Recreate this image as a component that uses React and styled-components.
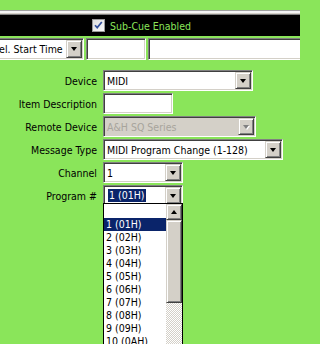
import React from 'react';
import styled, { createGlobalStyle, css } from 'styled-components';

const GREEN = '#8ae55a';

const GlobalStyle = createGlobalStyle`
  html, body {
    margin: 0;
    padding: 0;
    background: ${GREEN};
    overflow: hidden;
  }
  body {
    font-family: "DejaVu Sans Condensed", "Liberation Sans", Arial, sans-serif;
    font-size: 10.5px;
    color: #000;
  }
`;

const sunken = css`
  box-sizing: border-box;
  border: 1px solid;
  border-color: #808080 #fff #fff #808080;
  box-shadow: inset 1px 1px #404040, inset -1px -1px #d4d0c8;
`;

const raised = css`
  box-sizing: border-box;
  background: #d4d0c8;
  border: 1px solid;
  border-color: #d4d0c8 #404040 #404040 #d4d0c8;
  box-shadow: inset 1px 1px #fff, inset -1px -1px #808080;
`;

const Page = styled.div`
  width: 300px;
  height: 344px;
  padding-top: 10px;
  box-sizing: border-box;
  overflow: hidden;
`;

const Bevel = styled.div`
  height: 3px;
  border-top: 1px solid #a0a0a0;
  border-bottom: 1px solid #808080;
  background: linear-gradient(#f4f4f4 0 2px, #d4d0c8 2px 3px);
`;

const EnableBar = styled.div`
  height: 21px;
  background: #000;
  display: flex;
  align-items: center;
  padding-left: 92px;
  gap: 5px;
  color: ${GREEN};
  margin-bottom: 2px;
`;

const TimeRow = styled.div`
  display: flex;
  gap: 2px;
  margin-left: -11px;
  margin-right: -20px;
  height: 22px;
`;

const Form = styled.div`
  display: grid;
  grid-template-columns: 97px auto;
  column-gap: 6px;
  row-gap: 2px;
  align-items: center;
  margin-top: 10px;
`;

const Label = styled.div`
  justify-self: end;
  white-space: nowrap;
`;

const Combo = styled.div`
  ${sunken};
  width: ${p => p.$w}px;
  height: ${p => p.$h || 21}px;
  display: flex;
  align-items: stretch;
  padding: 1px;
  background: ${p => (p.$disabled ? '#d4d0c8' : '#fff')};
  color: ${p => (p.$disabled ? '#a7a49c' : '#000')};
  position: relative;
  justify-self: start;
`;

const ComboText = styled.div`
  flex: 1;
  display: flex;
  align-items: center;
  padding-left: 2px;
  white-space: nowrap;
  overflow: hidden;
`;

const Selected = styled.span`
  background: #0a246a;
  color: #fff;
  padding: 0 1px;
  margin-left: 1px;
  line-height: 13px;
`;

const DropButton = styled.div`
  ${raised};
  width: 16px;
  display: flex;
  align-items: center;
  justify-content: center;
`;

const Arrow = styled.div`
  width: 0;
  height: 0;
  border-left: 3.5px solid transparent;
  border-right: 3.5px solid transparent;
  ${p =>
    p.$up
      ? css`border-bottom: 4px solid #000;`
      : css`border-top: 4px solid ${p.$disabled ? '#808080' : '#000'};`}
  ${p => p.$disabled && css`filter: drop-shadow(1px 1px 0 #fff);`}
`;

const Field = styled.div`
  ${sunken};
  background: #fff;
  width: ${p => (p.$w ? `${p.$w}px` : 'auto')};
  flex: ${p => (p.$grow ? 1 : 'none')};
  height: ${p => p.$h || 21}px;
`;

const DropList = styled.div`
  position: absolute;
  left: -1px;
  top: calc(100% - 2px);
  width: 80px;
  height: 170px;
  box-sizing: border-box;
  border: 1px solid #000;
  background: #fff;
  display: flex;
  z-index: 2;
`;

const Items = styled.div`
  flex: 1;
  padding-top: 1px;
`;

const Item = styled.div`
  height: 13px;
  line-height: 13px;
  padding-left: 2px;
  white-space: nowrap;
  ${p => p.$active && css`background: #0a246a; color: #fff;`}
`;

const ScrollBar = styled.div`
  width: 16px;
  display: flex;
  flex-direction: column;
  background-color: #fff;
  background-image: conic-gradient(#d4d0c8 25%, #fff 0 50%, #d4d0c8 0 75%, #fff 0);
  background-size: 2px 2px;
`;

const ScrollButton = styled.div`
  ${raised};
  height: 16px;
  display: flex;
  align-items: center;
  justify-content: center;
`;

const Thumb = styled.div`
  ${raised};
  height: 83px;
`;

const CheckBox = () => (
  <svg width="13" height="13" viewBox="0 0 13 13">
    <defs>
      <linearGradient id="cb" x1="0" y1="0" x2="1" y2="1">
        <stop offset="0" stopColor="#dcdcdc" />
        <stop offset="1" stopColor="#fbfbfb" />
      </linearGradient>
    </defs>
    <rect x="0.5" y="0.5" width="12" height="12" fill="url(#cb)" stroke="#9a9a9a" />
    <path d="M3 6.2 L5.2 8.6 L9.8 3" fill="none" stroke="#34509c" strokeWidth="1.7" />
  </svg>
);

const programs = ['1 (01H)', '2 (02H)', '3 (03H)', '4 (04H)', '5 (05H)', '6 (06H)',
  '7 (07H)', '8 (08H)', '9 (09H)', '10 (0AH)', '11 (0BH)', '12 (0CH)'];

export default function App() {
  return (
    <Page>
      <GlobalStyle />
      <Bevel />
      <EnableBar>
        <CheckBox />
        <span>Sub-Cue Enabled</span>
      </EnableBar>
      <TimeRow>
        <Combo $w={95} $h={22}>
          <ComboText>Rel. Start Time</ComboText>
          <DropButton><Arrow /></DropButton>
        </Combo>
        <Field $w={60} $h={22} />
        <Field $grow $h={22} />
      </TimeRow>
      <Form>
        <Label>Device</Label>
        <Combo $w={150}>
          <ComboText>MIDI</ComboText>
          <DropButton><Arrow /></DropButton>
        </Combo>

        <Label>Item Description</Label>
        <Field $w={70} />

        <Label>Remote Device</Label>
        <Combo $w={153} $disabled>
          <ComboText>A&amp;H SQ Series</ComboText>
          <DropButton><Arrow $disabled /></DropButton>
        </Combo>

        <Label>Message Type</Label>
        <Combo $w={180}>
          <ComboText>MIDI Program Change (1-128)</ComboText>
          <DropButton><Arrow /></DropButton>
        </Combo>

        <Label>Channel</Label>
        <Combo $w={80}>
          <ComboText>1</ComboText>
          <DropButton><Arrow /></DropButton>
        </Combo>

        <Label>Program #</Label>
        <Combo $w={80}>
          <ComboText><Selected>1 (01H)</Selected></ComboText>
          <DropButton><Arrow /></DropButton>
          <DropList>
            <Items>
              <Item>&nbsp;</Item>
              {programs.map((p, i) => (
                <Item key={p} $active={i === 0}>{p}</Item>
              ))}
            </Items>
            <ScrollBar>
              <ScrollButton><Arrow $up /></ScrollButton>
              <Thumb />
            </ScrollBar>
          </DropList>
        </Combo>
      </Form>
    </Page>
  );
}
